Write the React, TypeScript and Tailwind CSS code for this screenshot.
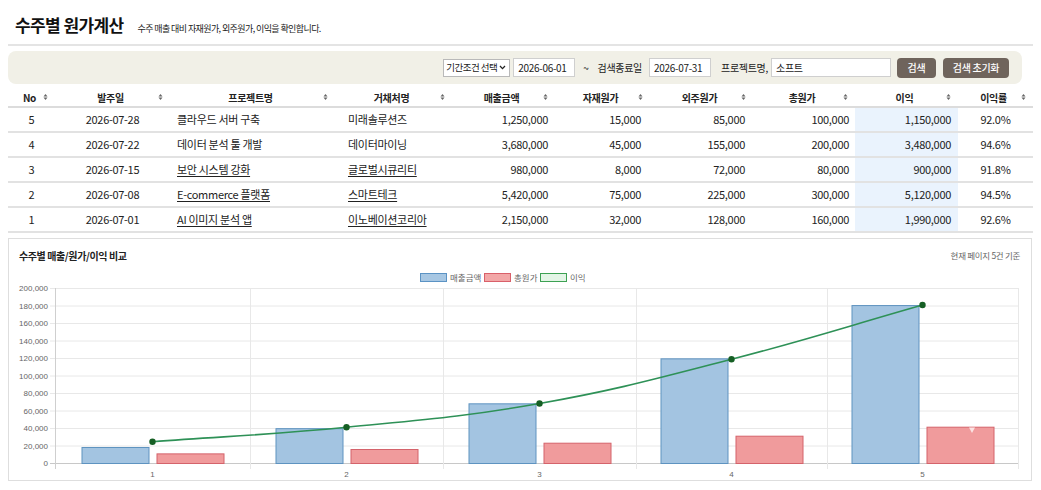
import React from "react";

const rows = [
  { no: 5, date: "2026-07-28", project: "클라우드 서버 구축", client: "미래솔루션즈", link: false, sales: "1,250,000", mat: "15,000", out: "85,000", total: "100,000", profit: "1,150,000", rate: "92.0%" },
  { no: 4, date: "2026-07-22", project: "데이터 분석 툴 개발", client: "데이터마이닝", link: false, sales: "3,680,000", mat: "45,000", out: "155,000", total: "200,000", profit: "3,480,000", rate: "94.6%" },
  { no: 3, date: "2026-07-15", project: "보안 시스템 강화", client: "글로벌시큐리티", link: true, sales: "980,000", mat: "8,000", out: "72,000", total: "80,000", profit: "900,000", rate: "91.8%" },
  { no: 2, date: "2026-07-08", project: "E-commerce 플랫폼", client: "스마트테크", link: true, sales: "5,420,000", mat: "75,000", out: "225,000", total: "300,000", profit: "5,120,000", rate: "94.5%" },
  { no: 1, date: "2026-07-01", project: "AI 이미지 분석 앱", client: "이노베이션코리아", link: true, sales: "2,150,000", mat: "32,000", out: "128,000", total: "160,000", profit: "1,990,000", rate: "92.6%" },
];

const headers = ["No", "발주일", "프로젝트명", "거채처명", "매출금액", "자재원가", "외주원가", "총원가", "이익", "이익률"];

const gridCols = "grid grid-cols-[47px_115px_165px_117px_103px_95px_103px_102px_103px_75px]";

function SortIcon() {
  return (
    <svg width="5" height="7" viewBox="0 0 5 7" className="absolute right-[7px] top-1/2 -translate-y-1/2">
      <path d="M2.5 0.5 L4.5 3 L0.5 3 Z" fill="#666" />
      <path d="M2.5 6.5 L4.5 4 L0.5 4 Z" fill="#666" />
    </svg>
  );
}

// chart data (page coordinates)
const centers = [152.5, 346.5, 539.5, 731.5, 922.5];
const sales = [18300, 39800, 68200, 119600, 180500];
const costs = [11000, 16000, 23200, 31200, 41500];
const profit = [24300, 40800, 68000, 118500, 180500];
const yOf = (v: number) => 463 - (v / 20000) * 17.5;

function splinePath(pts: [number, number][]) {
  const t = 0.4;
  const cps = pts.map((cur, i) => {
    const prev = pts[i - 1] || cur;
    const next = pts[i + 1] || cur;
    const d01 = Math.hypot(cur[0] - prev[0], cur[1] - prev[1]);
    const d12 = Math.hypot(next[0] - cur[0], next[1] - cur[1]);
    const s01 = d01 / (d01 + d12 || 1);
    const s12 = d12 / (d01 + d12 || 1);
    const fa = t * s01;
    const fb = t * s12;
    return {
      p: [cur[0] - fa * (next[0] - prev[0]), cur[1] - fa * (next[1] - prev[1])],
      n: [cur[0] + fb * (next[0] - prev[0]), cur[1] + fb * (next[1] - prev[1])],
    };
  });
  let d = `M${pts[0][0]},${pts[0][1]}`;
  for (let i = 1; i < pts.length; i++) {
    d += ` C${cps[i - 1].n[0]},${cps[i - 1].n[1]} ${cps[i].p[0]},${cps[i].p[1]} ${pts[i][0]},${pts[i][1]}`;
  }
  return d;
}

function Chart() {
  const ticks = [0, 20000, 40000, 60000, 80000, 100000, 120000, 140000, 160000, 180000, 200000];
  const vlines = [55, 250, 443, 636, 827, 1018];
  const pts = centers.map((c, i) => [c, yOf(profit[i])] as [number, number]);
  return (
    <svg width="1022" height="209" viewBox="9 271 1022 209" style={{ fontFamily: '"Liberation Sans", "Noto Sans CJK KR", sans-serif' }}>
      {/* legend */}
      <rect x="420.5" y="273.5" width="26" height="8" fill="#a7c7e3" stroke="#5b93c4" />
      <text x="450" y="280.5" fontSize="8.5" fill="#666">매출금액</text>
      <rect x="484.5" y="273.5" width="26" height="8" fill="#f2a7a7" stroke="#d9606a" />
      <text x="514" y="280.5" fontSize="8.5" fill="#666">총원가</text>
      <rect x="540.5" y="273.5" width="26" height="8" fill="#e3f5e6" stroke="#3da153" />
      <text x="570" y="280.5" fontSize="8.5" fill="#666">이익</text>

      {/* grid */}
      {ticks.map((v) => (
        <g key={v}>
          <line x1="50" x2="1018" y1={yOf(v) + 0.5} y2={yOf(v) + 0.5} stroke={v === 0 ? "#c8c8c8" : "#e8e8e8"} />
          <text x="48" y={yOf(v) + 3} fontSize="8" fill="#666" textAnchor="end">
            {v.toLocaleString("en-US")}
          </text>
        </g>
      ))}
      {vlines.map((x, i) => (
        <line key={x} x1={x + 0.5} x2={x + 0.5} y1="288" y2="469" stroke={i === 0 ? "#cfcfcf" : "#e8e8e8"} />
      ))}

      {/* bars */}
      {centers.map((c, i) => (
        <g key={c}>
          <rect x={c - 71 + 0.5} y={yOf(sales[i]) + 0.5} width="67" height={463 - yOf(sales[i])} fill="#a3c4e1" stroke="#5e93c0" />
          <rect x={c + 4 + 0.5} y={yOf(costs[i]) + 0.5} width="67" height={463 - yOf(costs[i])} fill="#f09b9c" stroke="#d4636b" />
          <text x={c} y="477" fontSize="8" fill="#666" textAnchor="middle">
            {i + 1}
          </text>
        </g>
      ))}
      <path d="M969 427.5 L975 427.5 L972 433 Z" fill="#fbe3e3" />

      {/* profit line */}
      <path d={splinePath(pts)} fill="none" stroke="#2e9157" strokeWidth="1.6" />
      {pts.map((p) => (
        <circle key={p[0]} cx={p[0]} cy={p[1]} r="3.2" fill="#165f24" />
      ))}
    </svg>
  );
}

export default function App() {
  return (
    <div className="w-[1041px] h-[490px] overflow-hidden bg-white text-[#222] font-['Noto_Sans_CJK_KR',sans-serif]">
      <div className="flex items-baseline gap-[14px] pl-[15px] pt-[12px] h-[44px]">
        <h1 className="text-[17px] font-bold tracking-[-0.6px] text-[#111]">수주별 원가계산</h1>
        <p className="text-[9px] tracking-[-0.6px] text-[#222]">수주 매출 대비 자재원가, 외주원가, 이익을 확인합니다.</p>
      </div>
      <div className="mx-[8px] h-[2px] bg-[#e4e4e4]" />

      {/* filter */}
      <div className="ml-[8px] mr-[19px] mt-[5px] h-[33px] rounded-lg bg-[#f1f0e7] flex items-center justify-end pr-[13px] text-[10px] tracking-[-0.3px] whitespace-nowrap">
        <div className="h-[18px] w-[67px] shrink-0 border border-[#b9b9b9] bg-white flex items-center justify-between pl-[2px] pr-[3px] text-[9.5px] tracking-[-0.5px]">
          <span>기간조건 선택</span>
          <svg width="7" height="5" viewBox="0 0 7 5"><path d="M1 1 L3.5 3.6 L6 1" fill="none" stroke="#222" strokeWidth="1.3" /></svg>
        </div>
        <input readOnly value="2026-06-01" className="ml-[3px] h-[19px] w-[62px] shrink-0 border border-[#cfcfcf] bg-white px-[4px] text-[10px] outline-none" />
        <span className="ml-[8px]">~</span>
        <span className="ml-[9px]">검색종료일</span>
        <input readOnly value="2026-07-31" className="ml-[7px] h-[19px] w-[62px] shrink-0 border border-[#cfcfcf] bg-white px-[4px] text-[10px] outline-none" />
        <span className="ml-[10px]">프로젝트명,</span>
        <input readOnly value="소프트" className="ml-[3px] h-[19px] w-[120px] shrink-0 border border-[#cfcfcf] bg-white px-[4px] text-[10px] outline-none" />
        <button className="ml-[6px] h-[20px] w-[39px] shrink-0 rounded-[4px] bg-[#6f645c] text-white text-[10px] font-medium">검색</button>
        <button className="ml-[7px] h-[20px] w-[66px] shrink-0 rounded-[4px] bg-[#6f645c] text-white text-[10px] font-medium">검색 초기화</button>
      </div>

      {/* table */}
      <div className="ml-[8px] mt-[4px] w-[1025px] text-[11px] tracking-[-0.3px]">
        <div className={`${gridCols} h-[20px] border-b-2 border-[#dcdcdc] font-bold text-[10px]`}>
          {headers.map((h) => (
            <div key={h} className="relative flex items-center justify-center pr-[4px]">
              {h}
              <SortIcon />
            </div>
          ))}
        </div>
        {rows.map((r) => (
          <div key={r.no} className={`${gridCols} h-[25px] border-b-2 border-[#e2e2e2]`}>
            <div className="flex items-center justify-center">{r.no}</div>
            <div className="flex items-center justify-center">{r.date}</div>
            <div className="flex items-center pl-[7px]">
              <span className={r.link ? "underline underline-offset-2" : ""}>{r.project}</span>
            </div>
            <div className="flex items-center pl-[13px]">
              <span className={r.link ? "underline underline-offset-2" : ""}>{r.client}</span>
            </div>
            <div className="flex items-center justify-end pr-[7px]">{r.sales}</div>
            <div className="flex items-center justify-end pr-[9px]">{r.mat}</div>
            <div className="flex items-center justify-end pr-[8px]">{r.out}</div>
            <div className="flex items-center justify-end pr-[6px]">{r.total}</div>
            <div className="flex items-center justify-end pr-[7px] bg-[#eaf3fd]">{r.profit}</div>
            <div className="flex items-center justify-center">{r.rate}</div>
          </div>
        ))}
      </div>

      {/* chart */}
      <div className="ml-[8px] mt-[5px] w-[1024px] h-[243px] border border-[#dedede]">
        <div className="h-[32px] flex items-center justify-between pl-[10px] pr-[11px]">
          <span className="text-[10px] font-bold tracking-[-0.4px]">수주별 매출/원가/이익 비교</span>
          <span className="text-[8.5px] text-[#666] tracking-[-0.3px]">현재 페이지 5건 기준</span>
        </div>
        <Chart />
      </div>
    </div>
  );
}
